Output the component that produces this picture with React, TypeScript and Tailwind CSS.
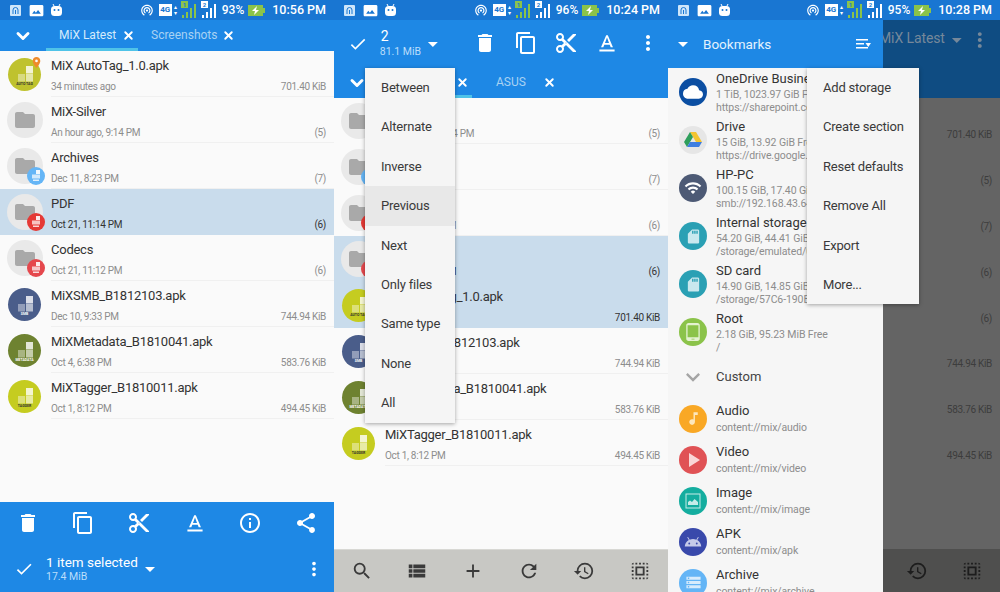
import React from 'react';
import { ChevronDown, X } from 'lucide-react';
import {
  MdAdd, MdAndroid, MdArrowDropDown, MdCheck, MdCloud, MdContentCopy, MdContentCut, MdDelete,
  MdExpandMore, MdFolder, MdInfoOutline, MdMoreVert, MdMusicNote, MdPhotoSizeSelectActual, MdPlace, MdPlayArrow,
  MdRefresh, MdRestore, MdSdCard, MdSearch, MdSelectAll, MdShare, MdStorage, MdTabletAndroid,
  MdTextFormat, MdViewList, MdWifi, MdWifiTethering,
} from 'react-icons/md';

const font = { fontFamily: 'Roboto, sans-serif' };

const Bars = ({ color, tag }: { color: string; tag: string }) => (
  <svg width="17" height="18" viewBox="0 0 17 18">
    <rect x="0" y="0" width="7" height="7" fill={color} />
    <text x="3.5" y="6" fontSize="6" fontWeight="700" textAnchor="middle" fill="#1976d2">{tag}</text>
    <rect x="1" y="14" width="2" height="3" fill={color} />
    <rect x="5" y="11" width="2" height="6" fill={color} />
    <rect x="9" y="7" width="2" height="10" fill={color} />
    <rect x="13" y="3" width="2" height="14" fill={color} />
  </svg>
);

const StatusBar = ({ battery, time }: { battery: string; time: string }) => (
  <div className="flex h-5 shrink-0 items-center bg-[#1976d2] pl-[10px] pr-2 text-white">
    <svg width="11" height="11" viewBox="0 0 11 11">
      <rect width="11" height="11" rx="1" fill="#cfe6fa" />
      <path d="M3 9V5a2.500 2.500 0 0 1 5 0v4M5.500 5v4" stroke="#1976d2" fill="none" />
    </svg>
    <MdPhotoSizeSelectActual className="ml-[8px] h-[15px] w-[15px]" />
    <svg width="11" height="13" viewBox="0 0 11 13" className="ml-[7px]">
      <path d="M3 2 2 0M8 2l1-2" stroke="#fff" />
      <rect y="2" width="11" height="10" rx="3.500" fill="#fff" />
      <circle cx="3.500" cy="6" r="1" fill="#1976d2" />
      <circle cx="7.500" cy="6" r="1" fill="#1976d2" />
    </svg>
    <MdWifiTethering className="ml-auto h-[14px] w-[14px]" />
    <span className="ml-[5px] flex h-[12px] w-[13px] items-center justify-center bg-white text-[8px] font-bold text-[#1976d2]">4G</span>
    <span className="ml-[1px] flex w-[5px] flex-col items-center text-[6px] leading-[6px]">
      <span>▴</span>
      <span>▾</span>
    </span>
    <span className="ml-[3px]"><Bars color="#8bc34a" tag="1" /></span>
    <span className="ml-[3px]"><Bars color="#ffffff" tag="2" /></span>
    <span className="ml-[4px] text-[12px] font-medium">{battery}</span>
    <svg width="17" height="11" viewBox="0 0 17 11" className="ml-[4px]">
      <rect width="15" height="11" fill="#8bc34a" />
      <rect x="15" y="3" width="2" height="5" fill="#8bc34a" />
      <path d="M9 1 4 6h3L6 10l5-5H8z" fill="#fff" />
    </svg>
    <span className="ml-[7px] text-[12.500px] font-medium">{time}</span>
  </div>
);

const ApkThumb = ({ color, label, blocks }: { color: string; label: string; blocks: string }) => (
  <div className={`flex h-[33px] w-[33px] flex-col items-center justify-end rounded-full pb-[5px] ${color}`}>
    <svg width="18" height="16" viewBox="0 0 18 16">
      <rect x="10" y="0" width="7" height="7.500" fill="#fff" opacity="0.8" />
      <rect x="2" y="8" width="7" height="7.500" fill="#fff" opacity="0.4" />
      <rect x="10" y="8" width="7" height="7.500" fill="#fff" opacity="0.6" />
    </svg>
    <span className={`whitespace-nowrap text-[3.500px] font-bold leading-[4px] ${blocks}`}>{label}</span>
  </div>
);

const FolderThumb = ({ badge }: { badge?: string }) => (
  <div className="relative -ml-[1px] flex h-9 w-9 items-center justify-center rounded-full bg-[#e9e9e9]">
    <MdFolder className="h-[24px] w-[24px] text-[#a9a9a9]" />
    {badge && (
      <span className={`absolute -bottom-[1px] -right-[2px] flex h-[18px] w-[18px] items-center justify-center rounded-full ${badge}`}>
        <svg width="10" height="12" viewBox="0 0 10 12">
          <rect x="5" y="0" width="4" height="4" fill="#fff" opacity="0.9" />
          <rect x="1" y="4.500" width="8" height="4" fill="#fff" opacity="0.7" />
          <rect x="2" y="9.500" width="6" height="1.500" fill="#fff" opacity="0.8" />
        </svg>
      </span>
    )}
  </div>
);

type FileItem = { name: string; sub: string; right: string; thumb: React.ReactNode; selected?: boolean };

const autoTag = (
  <div className="relative">
    <ApkThumb color="bg-[#bfc22e]" label="AUTO TAG" blocks="text-[#333]" />
    <MdPlace className="absolute -right-[2px] -top-[2px] h-[13px] w-[13px] text-[#ef8a2a]" />
  </div>
);
const smb = <ApkThumb color="bg-[#4a5d8a]" label="SMB" blocks="text-white" />;
const meta = <ApkThumb color="bg-[#6e8230]" label="METADATA" blocks="text-white" />;
const tagger = <ApkThumb color="bg-[#c5cc20]" label="TAGGER" blocks="text-[#333]" />;

const FileRow = ({ name, sub, right, thumb, selected }: FileItem) => (
  <div className={`flex h-[46px] shrink-0 ${selected ? 'bg-[#c9dcec]' : ''}`}>
    <div className="flex w-[51px] shrink-0 items-center pl-[8px]">{thumb}</div>
    <div className={`min-w-0 flex-1 whitespace-nowrap pt-[7px] ${selected ? '' : 'border-b border-[#f0f0f0]'}`}>
      <div className="text-[13px] leading-[16px] tracking-[-0.25px] text-[#333]">{name}</div>
      <div className={`mt-[6px] flex justify-between pr-2 text-[10px] leading-[14px] tracking-[-0.3px] ${selected ? 'text-[#333]' : 'text-[#8d8d8d]'}`}>
        <span>{sub}</span>
        <span>{right}</span>
      </div>
    </div>
  </div>
);

const TabBar = ({ second, secondLabel, secondWidth }: { second: string; secondLabel: string; secondWidth: string }) => (
  <div className="flex h-[31px] shrink-0 items-center bg-[#1e88e5] pl-[13px] text-white">
    <ChevronDown className="h-[20px] w-[20px] text-white" strokeWidth={3.5} />
    <div className="ml-[13px] flex h-full">
      <div className="flex h-full w-[92px] items-center border-b-[3px] border-[#4fc3e8] pt-[2px] text-[#d5ebfb]">
        <span className="ml-[13px] text-[12px]">MiX Latest</span>
        <X className="ml-auto mr-[3px] h-[13px] w-[13px] text-white" strokeWidth={3.5} />
      </div>
      <div className={`flex h-full items-center pb-[1px] text-[#a8d2f3] ${secondWidth}`}>
        <span className={`text-[12px] ${secondLabel}`}>{second}</span>
        <X className="ml-auto mr-[1px] h-[13px] w-[13px] text-white" strokeWidth={3.5} />
      </div>
    </div>
  </div>
);

const Menu = ({ items, className, active }: { items: string[]; className: string; active?: string }) => (
  <div className={`absolute z-20 bg-[#f5f5f5] shadow-[0_1px_4px_rgba(0,0,0,0.35)] ${className}`}>
    {items.map((item) => (
      <div key={item} className={`flex h-[39.400px] items-center pl-4 text-[13px] tracking-[-0.2px] text-[#3a3a3a] ${item === active ? 'bg-[#e8e8e8]' : ''}`}>
        {item}
      </div>
    ))}
  </div>
);

const ToolIcons = ({ className }: { className: string }) => (
  <div className={`grid grid-cols-6 justify-items-center ${className}`}>
    {[MdSearch, MdViewList, MdAdd, MdRefresh, MdRestore, MdSelectAll].map((Icon, i) => (
      <Icon key={i} className="h-[22px] w-[22px]" />
    ))}
  </div>
);

const firstList: FileItem[] = [
  { name: 'MiX AutoTag_1.0.apk', sub: '34 minutes ago', right: '701.40 KiB', thumb: autoTag },
  { name: 'MiX-Silver', sub: 'An hour ago, 9:14 PM', right: '(5)', thumb: <FolderThumb /> },
  { name: 'Archives', sub: 'Dec 11, 8:23 PM', right: '(7)', thumb: <FolderThumb badge="bg-[#64b5f6]" /> },
  { name: 'PDF', sub: 'Oct 21, 11:14 PM', right: '(6)', thumb: <FolderThumb badge="bg-[#e53935]" />, selected: true },
  { name: 'Codecs', sub: 'Oct 21, 11:12 PM', right: '(6)', thumb: <FolderThumb badge="bg-[#e5484d]" /> },
  { name: 'MiXSMB_B1812103.apk', sub: 'Dec 10, 9:33 PM', right: '744.94 KiB', thumb: smb },
  { name: 'MiXMetadata_B1810041.apk', sub: 'Oct 4, 6:38 PM', right: '583.76 KiB', thumb: meta },
  { name: 'MiXTagger_B1810011.apk', sub: 'Oct 1, 8:12 PM', right: '494.45 KiB', thumb: tagger },
];

const secondList: FileItem[] = [
  { name: 'MiX-Silver', sub: 'An hour ago, 9:14 PM', right: '(5)', thumb: <FolderThumb /> },
  { name: 'Archives', sub: 'Dec 11, 8:23 PM', right: '(7)', thumb: <FolderThumb badge="bg-[#64b5f6]" /> },
  { name: 'PDF', sub: 'Oct 21, 11:12 PM', right: '(6)', thumb: <FolderThumb badge="bg-[#e53935]" /> },
  { name: 'Codecs', sub: 'Oct 21, 11:14 PM', right: '(6)', thumb: <FolderThumb badge="bg-[#e5484d]" />, selected: true },
  { name: 'MiX AutoTag_1.0.apk', sub: '34 minutes ago', right: '701.40 KiB', thumb: <ApkThumb color="bg-[#c5cc20]" label="AUTO TAG" blocks="text-[#333]" />, selected: true },
  { name: 'MiXSMB_B1812103.apk', sub: 'Dec 10, 9:33 PM', right: '744.94 KiB', thumb: smb },
  { name: 'MiXMetadata_B1810041.apk', sub: 'Oct 4, 6:38 PM', right: '583.76 KiB', thumb: meta },
  { name: 'MiXTagger_B1810011.apk', sub: 'Oct 1, 8:12 PM', right: '494.45 KiB', thumb: <ApkThumb color="bg-[#c5cc20]" label="TAGGER" blocks="text-[#333]" /> },
];

const Circle = ({ color, children }: { color: string; children: React.ReactNode }) => (
  <div className={`flex h-[28px] w-[28px] shrink-0 items-center justify-center rounded-full ${color}`}>{children}</div>
);

const DriveLogo = () => (
  <svg width="20" height="18" viewBox="0 0 20 18">
    <path d="M7 1h6l6 10h-6z" fill="#f4c430" />
    <path d="M7 1 1 11l3 5 6-10z" fill="#2e9e5b" />
    <path d="M4 16h12l3-5H7z" fill="#3f7ee0" />
  </svg>
);

const ImageFrame = () => (
  <svg width="16" height="16" viewBox="0 0 16 16">
    <rect x="1" y="1" width="14" height="14" fill="none" stroke="#c6ece8" />
    <path d="M3 12V9l2-1.500L7 9l2.500-3L13 9v3z" fill="#c6ece8" />
  </svg>
);

const storages = [
  { name: 'OneDrive Business', sub: '1 TiB,  1023.97 GiB Free', path: 'https://sharepoint.com', icon: <Circle color="bg-[#0b4ea2]"><MdCloud className="h-[20px] w-[20px] text-white" /></Circle> },
  { name: 'Drive', sub: '15 GiB,  13.92 GiB Free', path: 'https://drive.google.com', icon: <Circle color="bg-[#e6e6e6]"><DriveLogo /></Circle> },
  { name: 'HP-PC', sub: '100.15 GiB,  17.40 GiB Free', path: 'smb://192.168.43.64', icon: <Circle color="bg-[#4d5a75]"><MdWifi className="h-[18px] w-[18px] text-white" /></Circle> },
  { name: 'Internal storage', sub: '54.20 GiB,  44.41 GiB Free', path: '/storage/emulated/0', icon: <Circle color="bg-[#2aa0b4]"><MdSdCard className="h-[17px] w-[17px] text-[#c9e8ee]" /></Circle> },
  { name: 'SD card', sub: '14.90 GiB,  14.85 GiB Free', path: '/storage/57C6-190E', icon: <Circle color="bg-[#2aa0b4]"><MdSdCard className="h-[17px] w-[17px] text-[#c9e8ee]" /></Circle> },
  { name: 'Root', sub: '2.18 GiB,  95.23 MiB Free', path: '/', icon: <Circle color="bg-[#8bc34a]"><MdTabletAndroid className="h-[18px] w-[18px] text-[#e4f2d2]" /></Circle> },
];

const customs = [
  { name: 'Audio', path: 'content://mix/audio', icon: <Circle color="bg-[#f9a825]"><MdMusicNote className="h-[17px] w-[17px] text-[#fde7bd]" /></Circle> },
  { name: 'Video', path: 'content://mix/video', icon: <Circle color="bg-[#e05255]"><MdPlayArrow className="h-[24px] w-[24px] text-[#f9d6d6]" /></Circle> },
  { name: 'Image', path: 'content://mix/image', icon: <Circle color="bg-[#14ad9f]"><ImageFrame /></Circle> },
  { name: 'APK', path: 'content://mix/apk', icon: <Circle color="bg-[#3949ab]"><MdAndroid className="h-[18px] w-[18px] text-[#c5cae9]" /></Circle> },
  { name: 'Archive', path: 'content://mix/archive', icon: <Circle color="bg-[#64b5f6]"><MdStorage className="h-[17px] w-[17px] text-[#d8ecfc]" /></Circle> },
];

const Drawer = () => (
  <div className="absolute bottom-0 left-0 top-5 z-10 flex w-[215px] flex-col overflow-hidden bg-[#f6f6f6]">
    <div className="flex h-[48px] shrink-0 items-center bg-[#1e88e5] pl-[3px] pr-[12px] text-white">
      <MdArrowDropDown className="h-[24px] w-[24px]" />
      <span className="ml-[8px] text-[13.500px] text-[#e3f2fd]">Bookmarks</span>
      <svg width="15" height="12" viewBox="0 0 15 12" className="ml-auto">
        <path d="M0 1h12v1.500H0zM0 5h8v1.500H0zM0 9h12v1.500H0z" fill="#fff" />
        <path d="M9.500 5H15l-2.750 4z" fill="#fff" />
      </svg>
    </div>
    {storages.map((s) => (
      <div key={s.name} className="flex h-[48px] shrink-0 items-center pl-[11px]">
        {s.icon}
        <div className="ml-[9px] min-w-0 flex-1 whitespace-nowrap">
          <div className="text-[13px] leading-[18px] text-[#333]">{s.name}</div>
          <div className="text-[10.500px] leading-[13px] tracking-[-0.1px] text-[#8d8d8d]">{s.sub}</div>
          <div className="text-[10.500px] leading-[13px] tracking-[-0.1px] text-[#8d8d8d]">{s.path}</div>
        </div>
      </div>
    ))}
    <div className="flex h-[42px] shrink-0 items-center pl-[11px]">
      <MdExpandMore className="h-[28px] w-[28px] text-[#a5a5a5]" />
      <span className="ml-[9px] text-[13px] text-[#444]">Custom</span>
    </div>
    {customs.map((c) => (
      <div key={c.name} className="flex h-[41px] shrink-0 items-center pl-[11px]">
        {c.icon}
        <div className="ml-[9px]">
          <div className="text-[13px] leading-[16px] text-[#333]">{c.name}</div>
          <div className="mt-[2px] text-[10.500px] leading-[13px] tracking-[-0.1px] text-[#8d8d8d]">{c.path}</div>
        </div>
      </div>
    ))}
  </div>
);

export default function App() {
  return (
    <div className="flex h-[592px] w-[1000px] overflow-hidden bg-[#fafafa]" style={font}>
      {/* selection in the bottom bar */}
      <div className="flex h-full w-[334px] flex-col">
        <StatusBar battery="93%" time="10:56 PM" />
        <TabBar second="Screenshots" secondLabel="ml-[13px]" secondWidth="w-[98px]" />
        <div className="flex-1">
          {firstList.map((f) => <FileRow key={f.name} {...f} />)}
        </div>
        <div className="flex h-[90px] shrink-0 flex-col bg-[#1e88e5] text-white">
          <div className="grid grid-cols-6 justify-items-center pt-[9px]">
            <MdDelete className="h-[24px] w-[24px]" />
            <MdContentCopy className="h-[24px] w-[24px]" />
            <MdContentCut className="h-[24px] w-[24px]" />
            <MdTextFormat className="h-[26px] w-[26px]" />
            <MdInfoOutline className="h-[24px] w-[24px]" />
            <MdShare className="h-[24px] w-[24px]" />
          </div>
          <div className="mt-[17px] flex items-center pl-[14px] pr-[9px]">
            <MdCheck className="h-[20px] w-[20px]" />
            <div className="ml-[12px]">
              <div className="text-[13.500px] leading-[16px]">1 item selected</div>
              <div className="text-[10.500px] leading-[14px] text-[#bbdefb]">17.4 MiB</div>
            </div>
            <MdArrowDropDown className="h-[24px] w-[24px]" />
            <MdMoreVert className="ml-auto h-[22px] w-[22px]" />
          </div>
        </div>
      </div>

      {/* multi selection with select menu */}
      <div className="relative flex h-full w-[334px] flex-col">
        <StatusBar battery="96%" time="10:24 PM" />
        <div className="flex h-[47px] shrink-0 items-center bg-[#1e88e5] pl-[14px] text-white">
          <MdCheck className="h-[20px] w-[20px]" />
          <div className="ml-[12px] w-[42px]">
            <div className="pb-[1px] pl-[1px] text-[14px] leading-[16px]">2</div>
            <div className="text-[10.500px] leading-[14px] text-[#bbdefb]">81.1 MiB</div>
          </div>
          <MdArrowDropDown className="h-[24px] w-[24px]" />
          <div className="ml-[20px] grid w-[203px] shrink-0 grid-cols-5 justify-items-center">
            <MdDelete className="h-[24px] w-[24px]" />
            <MdContentCopy className="h-[24px] w-[24px]" />
            <MdContentCut className="h-[24px] w-[24px]" />
            <MdTextFormat className="h-[26px] w-[26px]" />
            <MdMoreVert className="h-[24px] w-[24px]" />
          </div>
        </div>
        <TabBar second="ASUS" secondLabel="ml-[24px]" secondWidth="w-[85px]" />
        <div className="flex-1">
          {secondList.map((f) => <FileRow key={f.name + f.sub} {...f} />)}
        </div>
        <div className="flex h-[43px] shrink-0 items-center border-t border-[#d8d8d4] bg-[#c8c8c4]">
          <ToolIcons className="w-full text-[#3a3a3a]" />
        </div>
        <Menu
          className="left-[31px] top-[68px] w-[90px]"
          active="Previous"
          items={['Between', 'Alternate', 'Inverse', 'Previous', 'Next', 'Only files', 'Same type', 'None', 'All']}
        />
      </div>

      {/* drawer over a dimmed list */}
      <div className="relative flex h-full w-[332px] flex-col">
        <StatusBar battery="95%" time="10:28 PM" />
        <div className="flex h-[78px] shrink-0 items-start bg-[#0f4c82] pl-[211px] pr-[8px] pt-[8px] text-[#76889a]">
          <span className="whitespace-nowrap text-[14px] leading-[20px] tracking-[-0.1px]">MiX Latest</span>
          <MdArrowDropDown className="h-[24px] w-[24px]" />
          <MdMoreVert className="ml-auto h-[24px] w-[24px]" />
        </div>
        <div className="flex flex-1 flex-col items-end bg-[#646464] pr-2 pt-[14px] text-[10px] tracking-[-0.3px] text-[#3d3d3d]">
          {['701.40 KiB', '(5)', '(7)', '(6)', '(6)', '744.94 KiB', '583.76 KiB', '494.45 KiB'].map((v, i) => (
            <div key={i} className="flex h-[45.800px] shrink-0 items-center">{v}</div>
          ))}
        </div>
        <div className="flex h-[43px] shrink-0 items-center bg-[#4f4f4e]">
          <ToolIcons className="w-full text-[#1d1d1d]" />
        </div>
        <Drawer />
        <Menu
          className="left-[139px] top-[68px] w-[112px]"
          items={['Add storage', 'Create section', 'Reset defaults', 'Remove All', 'Export', 'More...']}
        />
      </div>
    </div>
  );
}
